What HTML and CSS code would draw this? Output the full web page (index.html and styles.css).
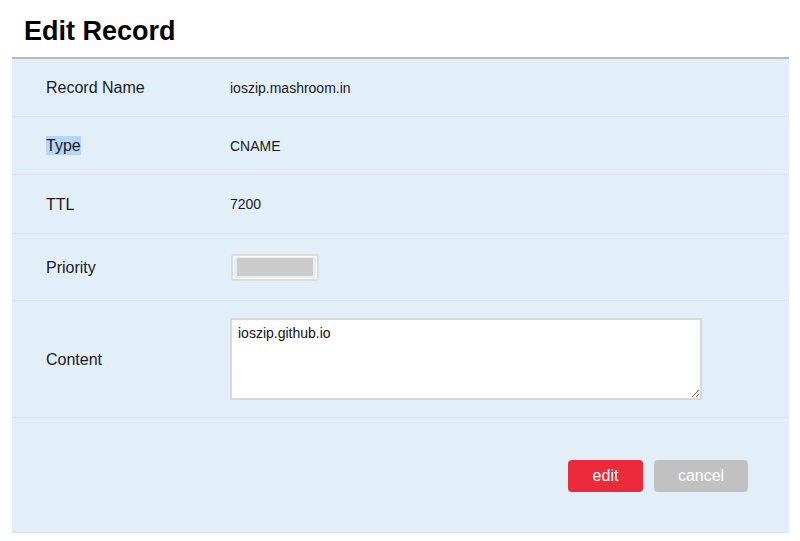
FILE: index.html
```html
<!DOCTYPE html>
<html lang="en">
<head>
  <meta charset="UTF-8" />
  <title>Edit Record</title>
  <link rel="stylesheet" href="styles.css">
</head>
<body>
  <div class="page">
    <header class="title-bar">
      <h1>Edit Record</h1>
    </header>

    <form class="record-form">
      <div class="row">
        <label class="field-label">Record Name</label>
        <span class="field-value">ioszip.mashroom.in</span>
      </div>
      <div class="row">
        <label class="field-label"><span class="selected">Type</span></label>
        <span class="field-value">CNAME</span>
      </div>
      <div class="row row-ttl">
        <label class="field-label">TTL</label>
        <span class="field-value">7200</span>
      </div>
      <div class="row row-priority">
        <label class="field-label" for="priority">Priority</label>
        <input type="text" id="priority" class="priority-input" disabled>
      </div>
      <div class="row row-content">
        <label class="field-label" for="content">Content</label>
        <textarea id="content" class="content-input">ioszip.github.io</textarea>
      </div>
      <div class="actions">
        <button type="button" class="btn btn-edit">edit</button>
        <button type="button" class="btn btn-cancel">cancel</button>
      </div>
    </form>
  </div>
</body>
</html>
```

FILE: styles.css
```css
/* Global */
body {
  margin: 0;
  font-family: "Liberation Sans", Arial, sans-serif;
  color: #1a1a1a;
  background: #fff;
}

.page {
  margin: 0 11px 0 12px;
}

/* Title */
.title-bar {
  padding: 15px 12px 10px;
  border-bottom: 2px solid #b7babd;
}

.title-bar h1 {
  margin: 0;
  font-size: 27px;
  line-height: 32px;
  font-weight: bold;
  color: #000;
}

/* Form */
.record-form {
  background: #e3eff8;
  border-bottom: 2px solid #e4e6e8;
}

.row {
  display: grid;
  grid-template-columns: 184px 1fr;
  align-items: center;
  height: 57px;
  padding-left: 34px;
  border-bottom: 1px solid #dde3e8;
}

.row-ttl {
  height: 58px;
}

.row-priority {
  height: 66px;
}

.row-content {
  height: 116px;
}

.field-label {
  font-size: 16px;
  padding-top: 1px;
}

.selected {
  background: #b4d5fe;
  padding: 1px 0;
}

.field-value {
  font-size: 14px;
}

.priority-input {
  box-sizing: border-box;
  width: 88px;
  height: 27px;
  margin-left: 1px;
  padding: 2px 4px 3px;
  border: 2px solid #dcdcdc;
  border-radius: 3px;
  background: #cccccc;
  background-clip: content-box;
  box-shadow: inset 0 0 0 1px #fff;
}

.content-input {
  box-sizing: border-box;
  width: 472px;
  height: 82px;
  padding: 5px 6px;
  font-family: "Liberation Sans", Arial, sans-serif;
  font-size: 14px;
  color: #111;
  border: 2px solid #d6d8da;
  background: #fff;
  resize: both;
}

/* Buttons */
.actions {
  display: flex;
  justify-content: flex-end;
  align-items: center;
  gap: 11px;
  height: 113px;
  padding-right: 41px;
}

.btn {
  height: 32px;
  margin-top: 2px;
  border: none;
  border-radius: 4px;
  color: #fff;
  font-family: "Liberation Sans", Arial, sans-serif;
  font-size: 16px;
  cursor: pointer;
}

.btn-edit {
  width: 75px;
  background: #eb2a3b;
}

.btn-cancel {
  width: 94px;
  background: #c1c1c1;
}
```
